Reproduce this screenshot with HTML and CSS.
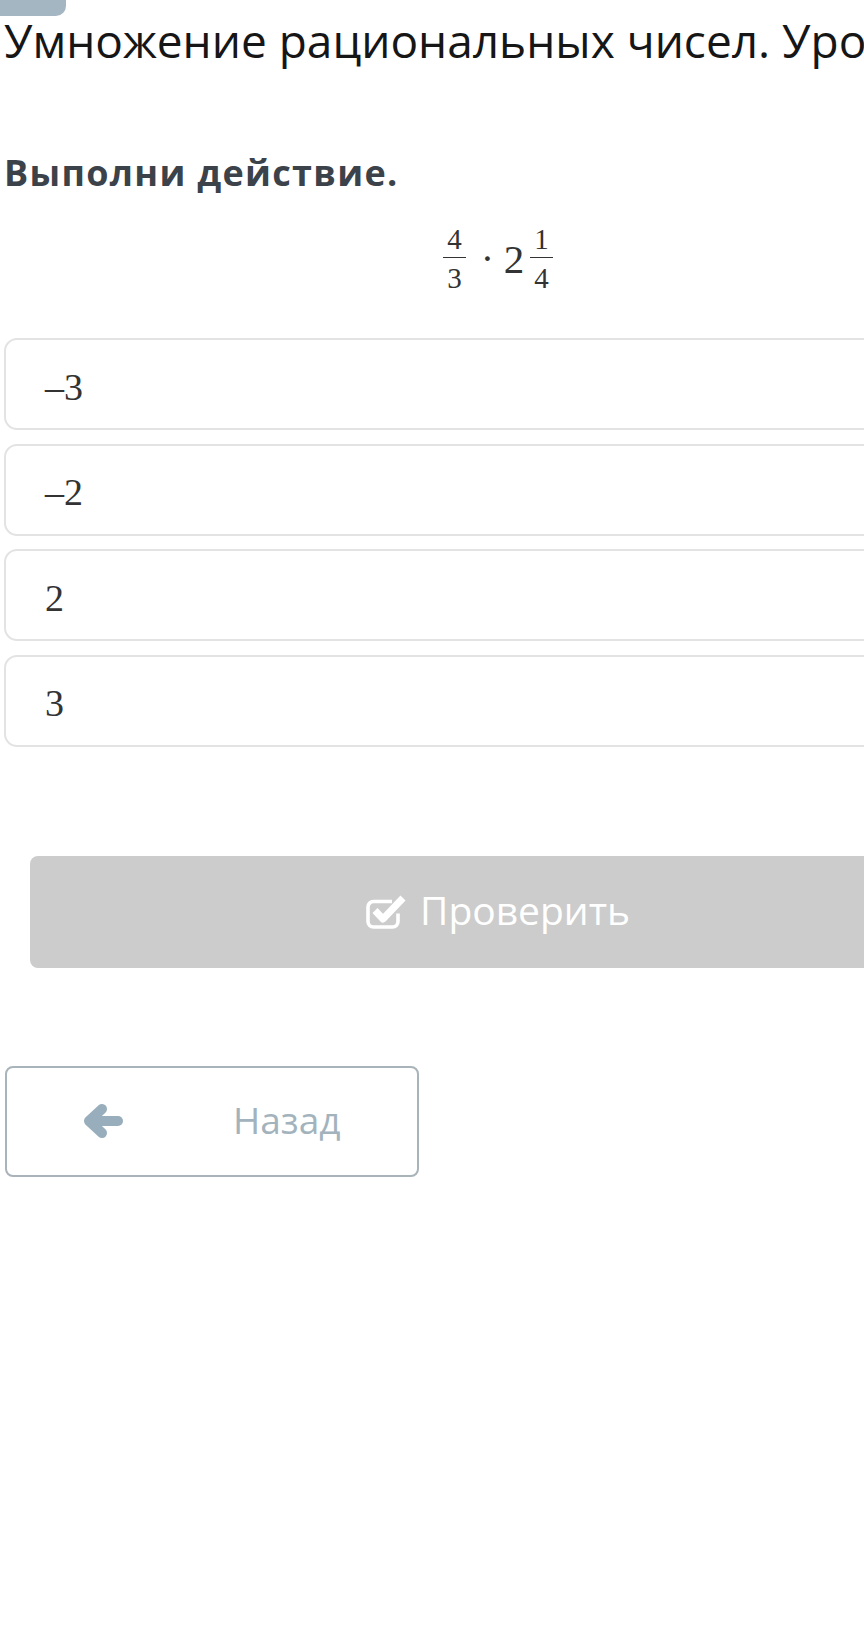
FILE: index.html
```html
<!DOCTYPE html>
<html lang="ru">
<head>
    <meta charset="UTF-8">
    <title>Умножение рациональных чисел</title>
    <link rel="stylesheet" href="styles.css">
</head>
<body>
<div class="page">
    <div class="tab"></div>
    <h1 class="title">Умножение рациональных чисел. Уровень 1</h1>

    <div class="task">
        <p class="question">Выполни действие.</p>

        <!-- 4/3 · 2 1/4 -->
        <div class="math">
            <span class="frac">
                <span class="num">4</span>
                <span class="den">3</span>
            </span>
            <span class="dot">&middot;</span>
            <span class="whole">2</span>
            <span class="frac">
                <span class="num">1</span>
                <span class="den">4</span>
            </span>
        </div>

        <ul class="answers">
            <li class="answer"><span>&ndash;3</span></li>
            <li class="answer"><span>&ndash;2</span></li>
            <li class="answer"><span>2</span></li>
            <li class="answer"><span>3</span></li>
        </ul>

        <div class="check_wrap">
            <button class="check_btn" type="button">
                <svg class="ico_check" width="42" height="34" viewBox="0 0 42 34">
                    <path d="M26 6.5H7.5a5.5 5.5 0 0 0 -5.5 5.5V26.5a5.5 5.5 0 0 0 5.5 5.5h19a5.5 5.5 0 0 0 5.5 -5.5v-8" fill="none" stroke="#fff" stroke-width="3.6"/>
                    <path d="M9 15.5l8 8.5l20 -21" fill="none" stroke="#fff" stroke-width="7" stroke-linejoin="round"/>
                </svg>
                <span>Проверить</span>
            </button>
        </div>

        <div class="nav">
            <button class="back_btn" type="button">
                <svg class="ico_back" width="40" height="36" viewBox="0 0 40 36">
                    <path d="M35 18H10" fill="none" stroke="#98aebc" stroke-width="10" stroke-linecap="round"/>
                    <path d="M19 6L6 18l13 12" fill="none" stroke="#98aebc" stroke-width="10" stroke-linecap="round" stroke-linejoin="round"/>
                </svg>
                <span>Назад</span>
            </button>
        </div>
    </div>
</div>
</body>
</html>
```

FILE: styles.css
```css
*{margin: 0;padding: 0;box-sizing: border-box;}
html,body{
    overflow-x: hidden;
    background: #fff;
}
body{
    font-family: "Open Sans", "Liberation Sans", sans-serif;
    color: #222;
}
.page{
    width: 992px;
    padding-left: 4px;
    min-height: 1627px;
}
.tab{
    width: 66px;
    height: 16px;
    margin-left: -4px;
    background: #a5b6c3;
    border-radius: 0 0 10px 0;
}
.title{
    font-size: 46px;
    font-weight: 400;
    line-height: 48px;
    white-space: nowrap;
    color: #161616;
}
.question{
    margin-top: 89px;
    font-size: 36px;
    font-weight: 700;
    line-height: 40px;
    letter-spacing: 1.3px;
    color: #3c4249;
}
/* формула */
.math{
    display: flex;
    justify-content: center;
    align-items: center;
    margin-top: 32px;
    height: 68px;
    font-family: "Liberation Serif", "DejaVu Serif", serif;
    color: #333;
}
.frac{
    display: inline-flex;
    flex-direction: column;
    align-items: stretch;
    text-align: center;
    font-size: 29px;
    line-height: 1;
}
.frac .num{
    padding: 0 4px 3px;
    border-bottom: 1.6px solid #333;
}
.frac .den{
    padding-top: 6px;
}
.dot{
    width: 10px;
    margin-left: 15px;
    text-align: center;
    font-size: 40px;
    line-height: 1;
}
.whole{
    margin-left: 13px;
    margin-right: 6px;
    font-size: 41px;
    line-height: 1;
}
/* варианты ответа */
.answers{
    list-style: none;
    margin-top: 45px;
    display: flex;
    flex-direction: column;
    gap: 13.5px;
}
.answer{
    display: flex;
    align-items: center;
    height: 92px;
    padding: 5px 0 0 39px;
    border: 2px solid #e3e3e3;
    border-radius: 13px;
    font-family: "Liberation Serif", "DejaVu Serif", serif;
    font-size: 38px;
    line-height: 1;
    color: #333;
}
/* кнопки */
.check_wrap{
    padding: 0 26px;
    margin-top: 109px;
}
.check_btn{
    display: flex;
    justify-content: center;
    align-items: center;
    gap: 12px;
    width: 100%;
    height: 112px;
    border: none;
    border-radius: 8px;
    background: #cccccc;
    color: #fff;
    font-family: "Open Sans", "Liberation Sans", sans-serif;
    font-size: 39px;
}
.check_btn span{
    margin-top: -4px;
}
.nav{
    margin-top: 98px;
}
.back_btn{
    display: flex;
    align-items: center;
    width: 414px;
    height: 111px;
    margin-left: 1px;
    padding-left: 76px;
    border: 2px solid #a9b3ba;
    border-radius: 8px;
    background: #fff;
    color: #a3b3bd;
    font-family: "Open Sans", "Liberation Sans", sans-serif;
    font-size: 37px;
}
.back_btn span{
    margin-left: 110px;
    margin-top: -4px;
}
```
